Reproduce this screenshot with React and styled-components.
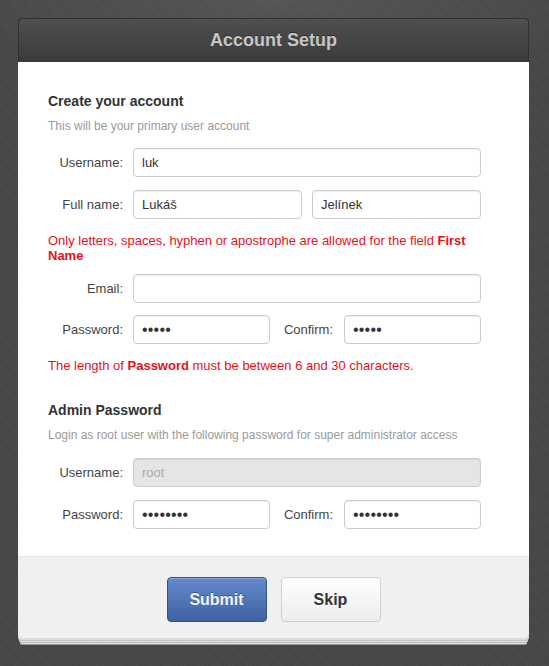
import React from "react";
import styled, { createGlobalStyle } from "styled-components";

const GlobalStyle = createGlobalStyle`
  html, body {
    margin: 0;
    padding: 0;
    min-height: 100%;
  }
  body {
    font-family: "Liberation Sans", Arial, sans-serif;
    background-color: #474747;
    background-image:
      radial-gradient(ellipse 60% 12% at 50% 0%, rgba(255, 255, 255, 0.08), rgba(255, 255, 255, 0)),
      repeating-linear-gradient(45deg, rgba(255, 255, 255, 0.025) 0px, rgba(255, 255, 255, 0.025) 1px, rgba(0, 0, 0, 0.03) 1px, rgba(0, 0, 0, 0.03) 2px);
    min-height: 666px;
  }
`;

const Page = styled.div`
  padding: 18px 20px 30px 18px;
`;

const Panel = styled.div`
  width: 511px;
  border-radius: 4px;
  box-shadow:
    0 2px 0 0 #dcdcdc,
    0 3px 0 0 #c4c4c4,
    0 5px 0 -1px #e2e2e2,
    0 6px 0 -1px #bdbdbd,
    0 8px 0 -2px #dedede,
    0 9px 0 -2px #9a9a9a;
`;

const Header = styled.div`
  height: 44px;
  display: flex;
  align-items: center;
  justify-content: center;
  background: linear-gradient(#4f4f4f, #3b3b3b);
  border: 1px solid #303030;
  border-bottom: none;
  border-radius: 4px 4px 0 0;
  box-sizing: border-box;
`;

const Title = styled.h1`
  margin: 0;
  font-size: 18px;
  font-weight: bold;
  color: #c6c6c6;
  text-shadow: 0 -1px 0 rgba(0, 0, 0, 0.4);
`;

const Body = styled.div`
  background: #fff;
  padding: 29px 48px 27px 30px;
`;

const SectionTitle = styled.h2`
  margin: ${(p) => (p.$spaced ? "27px" : "0")} 0 0;
  font-size: 14px;
  line-height: 20px;
  font-weight: bold;
  color: #333;
`;

const SectionHint = styled.p`
  margin: 6px 0 ${(p) => p.$bottom || 13}px;
  font-size: 12px;
  line-height: 18px;
  color: #9a9a9a;
`;

const Row = styled.div`
  display: grid;
  grid-template-columns: 75px 1fr;
  column-gap: 10px;
  align-items: center;
  margin-top: ${(p) => p.$top ?? 13}px;
`;

const Label = styled.label`
  font-size: 13px;
  color: #444;
  text-align: right;
  padding-right: ${(p) => p.$pad || 0}px;
`;

const Pair = styled.div`
  display: grid;
  grid-template-columns: ${(p) => (p.$split ? "1fr 74px 1fr" : "1fr 1fr")};
  column-gap: ${(p) => (p.$split ? 0 : 10)}px;
  align-items: center;
`;

const Input = styled.input`
  box-sizing: border-box;
  width: 100%;
  height: 29px;
  padding: 0 8px;
  border: 1px solid #cccccc;
  border-radius: 4px;
  box-shadow: inset 0 1px 1px rgba(0, 0, 0, 0.07);
  font-family: "Liberation Sans", Arial, sans-serif;
  font-size: 13px;
  color: #333;
  background: #fff;
  outline: none;

  &:disabled {
    background: #e5e5e5;
    color: #aaa;
  }

  &[type="password"] {
    font-size: 16px;
    letter-spacing: 0.2px;
  }
`;

const ErrorText = styled.p`
  margin: ${(p) => p.$top || 14}px 0 0;
  font-size: 13px;
  line-height: 15px;
  color: #e3121b;

  b {
    font-weight: bold;
  }
`;

const Footer = styled.div`
  display: flex;
  justify-content: center;
  gap: 14px;
  padding: 20px 0 16px;
  background: #f0f0f0;
  border-top: 1px solid #e6e6e6;
  border-radius: 0 0 4px 4px;
`;

const Button = styled.button`
  width: 100px;
  height: 45px;
  border-radius: 4px;
  font-family: "Liberation Sans", Arial, sans-serif;
  font-size: 16px;
  font-weight: bold;
  cursor: pointer;
  border: 1px solid ${(p) => (p.$primary ? "#33548f" : "#cfcfcf")};
  color: ${(p) => (p.$primary ? "#f2f5fb" : "#333")};
  background: ${(p) =>
    p.$primary
      ? "linear-gradient(#6689cc, #3e62a1)"
      : "linear-gradient(#ffffff, #ececec)"};
  text-shadow: ${(p) => (p.$primary ? "0 -1px 0 rgba(0,0,0,0.3)" : "0 1px 0 #fff")};
  box-shadow: inset 0 1px 0 rgba(255, 255, 255, 0.25);
`;

export default function App() {
  return (
    <Page>
      <GlobalStyle />
      <Panel>
        <Header>
          <Title>Account Setup</Title>
        </Header>
        <Body>
          <SectionTitle>Create your account</SectionTitle>
          <SectionHint>This will be your primary user account</SectionHint>

          <Row $top={0}>
            <Label>Username:</Label>
            <Input defaultValue="luk" />
          </Row>
          <Row>
            <Label>Full name:</Label>
            <Pair>
              <Input defaultValue="Lukáš" />
              <Input defaultValue="Jelínek" />
            </Pair>
          </Row>
          <ErrorText>
            Only letters, spaces, hyphen or apostrophe are allowed for the field <b>First Name</b>
          </ErrorText>
          <Row $top={11}>
            <Label>Email:</Label>
            <Input />
          </Row>
          <Row $top={12}>
            <Label>Password:</Label>
            <Pair $split>
              <Input type="password" defaultValue="12345" />
              <Label $pad={11}>Confirm:</Label>
              <Input type="password" defaultValue="12345" />
            </Pair>
          </Row>
          <ErrorText>
            The length of <b>Password</b> must be between 6 and 30 characters.
          </ErrorText>

          <SectionTitle $spaced>Admin Password</SectionTitle>
          <SectionHint $bottom={14}>
            Login as root user with the following password for super administrator access
          </SectionHint>

          <Row $top={0}>
            <Label>Username:</Label>
            <Input defaultValue="root" disabled />
          </Row>
          <Row>
            <Label>Password:</Label>
            <Pair $split>
              <Input type="password" defaultValue="12345678" />
              <Label $pad={11}>Confirm:</Label>
              <Input type="password" defaultValue="12345678" />
            </Pair>
          </Row>
        </Body>
        <Footer>
          <Button $primary>Submit</Button>
          <Button>Skip</Button>
        </Footer>
      </Panel>
    </Page>
  );
}
